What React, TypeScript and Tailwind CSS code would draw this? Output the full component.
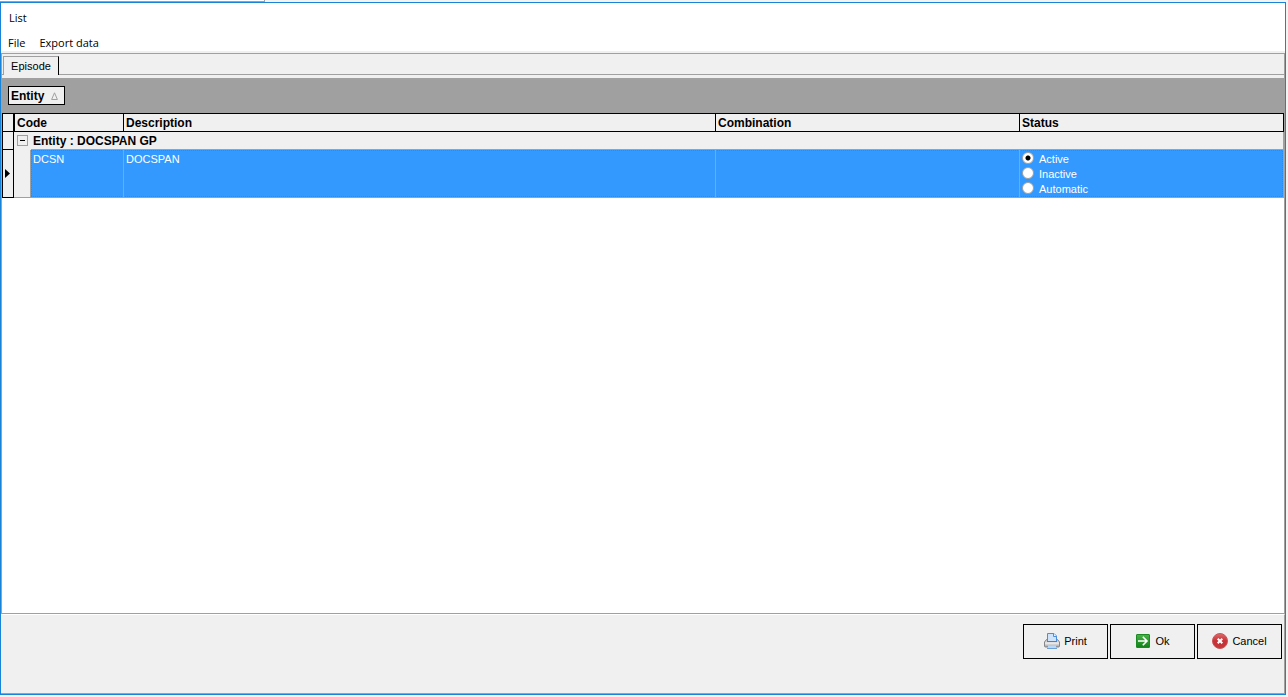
import { useState } from 'react';

const statuses = ['Active', 'Inactive', 'Automatic'];

const footerButton =
  'flex h-[35px] w-[85px] items-center justify-center gap-1 border border-black bg-[#f0f0f0] pb-px hover:bg-[#e5f1fb]';

const headerCell = 'border-y border-r border-black p-0 pt-px pl-0.5 text-xs leading-4 font-bold';

const dataCell = 'border-r border-b border-[#a0a0a0] p-0';

// one pixel on, one pixel off; the cells after the first start on the off pixel so the dots run on
const focusLineFirst = 'h-px bg-[repeating-linear-gradient(90deg,#cc6600_0px,#cc6600_1px,#3399ff_1px,#3399ff_2px)]';
const focusLine = 'h-px bg-[repeating-linear-gradient(90deg,#3399ff_0px,#3399ff_1px,#cc6600_1px,#cc6600_2px)]';
const focusSide = 'w-px bg-[repeating-linear-gradient(180deg,#cc6600_0px,#cc6600_1px,#3399ff_1px,#3399ff_2px)]';

function PrintIcon() {
  return (
    <svg width="16" height="16" viewBox="0 0 16 16" aria-hidden="true">
      <defs>
        <linearGradient id="printBody" x1="0" y1="0" x2="0" y2="1">
          <stop offset="0" stopColor="#b4b4b8" />
          <stop offset="0.5" stopColor="#ececee" />
          <stop offset="1" stopColor="#9b9ba0" />
        </linearGradient>
      </defs>
      <path d="M2.5 6.5h11l2 2.500v4q0 1-1 1h-13q-1 0-1-1v-4z" fill="url(#printBody)" stroke="#85858a" />
      <path d="M3.5 8.5v-8h6.500l2.500 2.500v5.500z" fill="#cfe4fb" stroke="#4b8edb" />
      <path d="M9.500 .5v3h3" fill="#f4f9ff" stroke="#4b8edb" />
      <path d="M3 8.500h10" stroke="#77777c" />
      <path d="M4 12.500h8v2.500h-8z" fill="#b9d7f7" />
      <path d="M3 15.500h10" stroke="#6d9fd8" />
    </svg>
  );
}

function OkIcon() {
  return (
    <svg width="16" height="16" viewBox="0 0 16 16" aria-hidden="true">
      <defs>
        <linearGradient id="okFill" x1="0" y1="0" x2="0" y2="1">
          <stop offset="0" stopColor="#4db04b" />
          <stop offset="1" stopColor="#0f8415" />
        </linearGradient>
      </defs>
      <rect x="1.5" y="1.5" width="13" height="13" rx="0.5" fill="url(#okFill)" stroke="#1c8a22" />
      <path d="M3 8h9M7.800 3.800L12 8l-4.200 4.200" fill="none" stroke="#fff" strokeWidth="1.600" />
    </svg>
  );
}

function CancelIcon() {
  return (
    <svg width="16" height="16" viewBox="0 0 16 16" aria-hidden="true">
      <defs>
        <linearGradient id="cancelFill" x1="0" y1="0" x2="0" y2="1">
          <stop offset="0" stopColor="#dc6b6b" />
          <stop offset="0.5" stopColor="#c73136" />
          <stop offset="1" stopColor="#c2383c" />
        </linearGradient>
      </defs>
      <circle cx="8" cy="8" r="7.5" fill="url(#cancelFill)" stroke="#cc5356" />
      <path d="M5.7 5.7l4.6 4.6M10.3 5.7l-4.6 4.6" stroke="#fff" strokeWidth="2" />
    </svg>
  );
}

function EpisodeGrid() {
  const [status, setStatus] = useState('Active');
  const [expanded, setExpanded] = useState(true);

  return (
    <table className="w-full table-fixed border-separate border-spacing-0 text-left">
      <colgroup>
        <col className="w-3" />
        <col className="w-[17px]" />
        <col className="w-[93px]" />
        <col />
        <col className="w-[304px]" />
        <col className="w-[264px]" />
      </colgroup>
      <thead className="bg-[#f0f0f0]">
        <tr className="h-[19px]">
          <td className="border border-black p-0" />
          <th colSpan={2} className="border border-black p-0 pt-px pl-0.5 text-xs leading-4 font-bold">
            Code
          </th>
          <th className={headerCell}>Description</th>
          <th className={headerCell}>Combination</th>
          <th className={headerCell}>Status</th>
        </tr>
      </thead>
      <tbody>
        <tr className="h-[18px] bg-[#f0f0f0]">
          <td className="border-x border-b border-black p-0" />
          <td className="p-0 pb-px pl-[3px]">
            <button
              type="button"
              aria-label="Toggle group"
              aria-expanded={expanded}
              onClick={() => setExpanded(!expanded)}
              className="flex size-[11px] items-center justify-center border border-[#a0a0a0]"
            >
              <span className="h-px w-[5px] bg-black" />
            </button>
          </td>
          <td colSpan={4} className="border-r border-b border-[#a0a0a0] p-0 pt-px pl-0.5 text-xs leading-4 font-bold">
            Entity : DOCSPAN GP
          </td>
        </tr>
        {expanded && (
          <tr className="h-12 bg-[#3399ff] align-top text-white">
            <td className="border-x border-b border-black bg-[#f0f0f0] p-0 align-middle">
              <svg width="5" height="9" viewBox="0 0 5 9" className="ml-0.5" aria-hidden="true">
                <path d="M0 0v9l5-4.5z" fill="#000" />
              </svg>
            </td>
            <td className="border-r border-b border-[#a0a0a0] bg-[#f0f0f0] p-0" />
            <td className={dataCell}>
              <div className={focusLineFirst} />
              <div className="flex h-[45px] gap-px leading-4">
                <div className={focusSide} />
                DCSN
              </div>
              <div className={focusLineFirst} />
            </td>
            <td className={dataCell}>
              <div className={focusLine} />
              <div className="h-[45px] pl-0.5 leading-4">DOCSPAN</div>
              <div className={focusLine} />
            </td>
            <td className={dataCell}>
              <div className={focusLine} />
              <div className="h-[45px]" />
              <div className={focusLine} />
            </td>
            <td className={dataCell}>
              <div className={focusLine} />
              <div className="flex h-[45px] justify-between pl-0.5">
                <div>
                  {statuses.map((name) => (
                    <label key={name} className="flex h-[15px] items-start gap-[5px]">
                      <input
                        type="radio"
                        name="status"
                        value={name}
                        checked={status === name}
                        onChange={() => setStatus(name)}
                        className="mt-px size-3 appearance-none rounded-full border border-[#a0a0a0] bg-white checked:bg-[radial-gradient(circle,black_2px,white_3px)]"
                      />
                      <span className="leading-4">{name}</span>
                    </label>
                  ))}
                </div>
                <div className={focusSide} />
              </div>
              <div className={focusLine} />
            </td>
          </tr>
        )}
      </tbody>
    </table>
  );
}

export default function App() {
  return (
    <div className="flex min-h-screen flex-col bg-[#f3f3f3] pr-0.5 pb-0.5 font-['Liberation_Sans',Arial,sans-serif] text-[11px] leading-[15px] text-black">
      <div className="h-0.5 w-[265px] border-r border-b border-[#a0a0a0] bg-white" />

      <div className="flex flex-1 flex-col border border-[#1883d7] bg-[#f0f0f0]">
        <header className="bg-white font-['Open_Sans','Segoe_UI',sans-serif]">
          <h1 className="mb-0.5 flex h-7 items-center pl-2">List</h1>
          <nav className="flex h-[18px] items-center gap-3.5 pl-[7px]">
            <button type="button">File</button>
            <button type="button">Export data</button>
          </nav>
        </header>

        <main className="mt-0.5 flex flex-1 flex-col border border-[#a0a0a0]">
          <div className="flex h-[21px] items-stretch pt-0.5">
            <div className="w-px border-b border-[#a0a0a0]" />
            <button type="button" className="w-14 border-t border-r border-l border-t-[#a0a0a0] border-r-black border-l-[#a0a0a0]">
              Episode
            </button>
            <div className="flex-1 border-b border-[#a0a0a0]" />
          </div>

          <div className="mt-[3px] flex h-[35px] items-center bg-[#a0a0a0] pl-1.5">
            <button
              type="button"
              className="flex h-[19px] w-[57px] items-center justify-between border border-black bg-[#f0f0f0] pr-1.5 pl-0.5 text-xs font-bold"
            >
              Entity
              <svg width="7" height="8" viewBox="0 0 7 8" aria-hidden="true">
                <path d="M3.5.8L.6 7.5h5.8z" fill="none" stroke="#a0a0a0" />
              </svg>
            </button>
          </div>

          <div className="flex-1 bg-white">
            <EpisodeGrid />
          </div>
        </main>

        <footer className="flex h-20 items-start justify-end gap-0.5 border-t border-r border-b border-t-white border-r-[#a0a0a0] border-b-[#a0a0a0] pt-[9px] pr-0.5">
          <button type="button" className={footerButton}>
            <PrintIcon />
            Print
          </button>
          <button type="button" className={footerButton}>
            <OkIcon />
            Ok
          </button>
          <button type="button" className={footerButton}>
            <CancelIcon />
            Cancel
          </button>
        </footer>
      </div>
    </div>
  );
}
